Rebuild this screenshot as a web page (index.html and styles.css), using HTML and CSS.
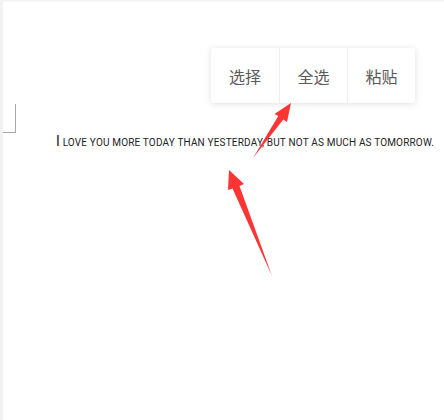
FILE: index.html
```html
<!DOCTYPE html>
<html lang="zh-CN">
<head>
    <meta charset="UTF-8">
    <meta name="viewport" content="width=device-width, initial-scale=1.0">
    <title>选择</title>
    <link rel="stylesheet" href="styles.css">
</head>
<body>
    <div class="screen">
        <div class="menu_row">
            <ul class="menu">
                <li>选择</li>
                <li>全选</li>
                <li>粘贴</li>
            </ul>
        </div>
        <div class="cursor"></div>
        <p class="quote">I love you more today than yesterday, but not as much as tomorrow.</p>
    </div>
    <svg class="arrows" width="444" height="420" viewBox="0 0 444 420">
        <polygon points="229,170 244,184 239.5,186 272,276 232.5,188.5 228,190" />
        <polygon points="291,103 287,122 283.3,119.5 253,158 278.3,116.1 274.5,114" />
    </svg>
</body>
</html>
```

FILE: styles.css
```css
*{margin:0; padding:0; box-sizing: border-box;}
body{background-color: #fff; width:444px; height:420px; overflow:hidden;}
li{list-style: none;}

.screen{
    height:420px;
    border-left:3px solid #f2f2f2;
    box-shadow: inset 0 2px 2px -1px #ececec;
    padding-top:48px;
}
.menu_row{
    display:flex;
    justify-content: flex-end;
    padding-right:29px;
}
.menu{
    display:flex;
    background-color:#fff;
    box-shadow: 0 1px 6px rgba(0,0,0,0.13);
    border-radius:2px;
}
.menu li{
    width:68px;
    height:55px;
    display:flex;
    align-items:center;
    justify-content:center;
    font-family:"Noto Sans CJK SC", sans-serif;
    font-size:16px;
    color:#5a5a5a;
}
.menu li + li{
    border-left:1px solid #efefef;
}
.cursor{
    width:13px;
    height:29px;
    margin-top:1px;
    border-right:1px solid #aaa;
    border-bottom:1px solid #aaa;
}
.quote{
    margin-top:0;
    padding-left:53px;
    font-family:Roboto, "Liberation Sans", sans-serif;
    font-size:10px;
    line-height:16px;
    letter-spacing:0.17px;
    text-transform: uppercase;
    color:#222;
    white-space:nowrap;
}
.quote::first-letter{
    font-size:14px;
}
.arrows{
    position:absolute;
    left:0;
    top:0;
}
.arrows polygon{
    fill:#fb3434;
}
```
